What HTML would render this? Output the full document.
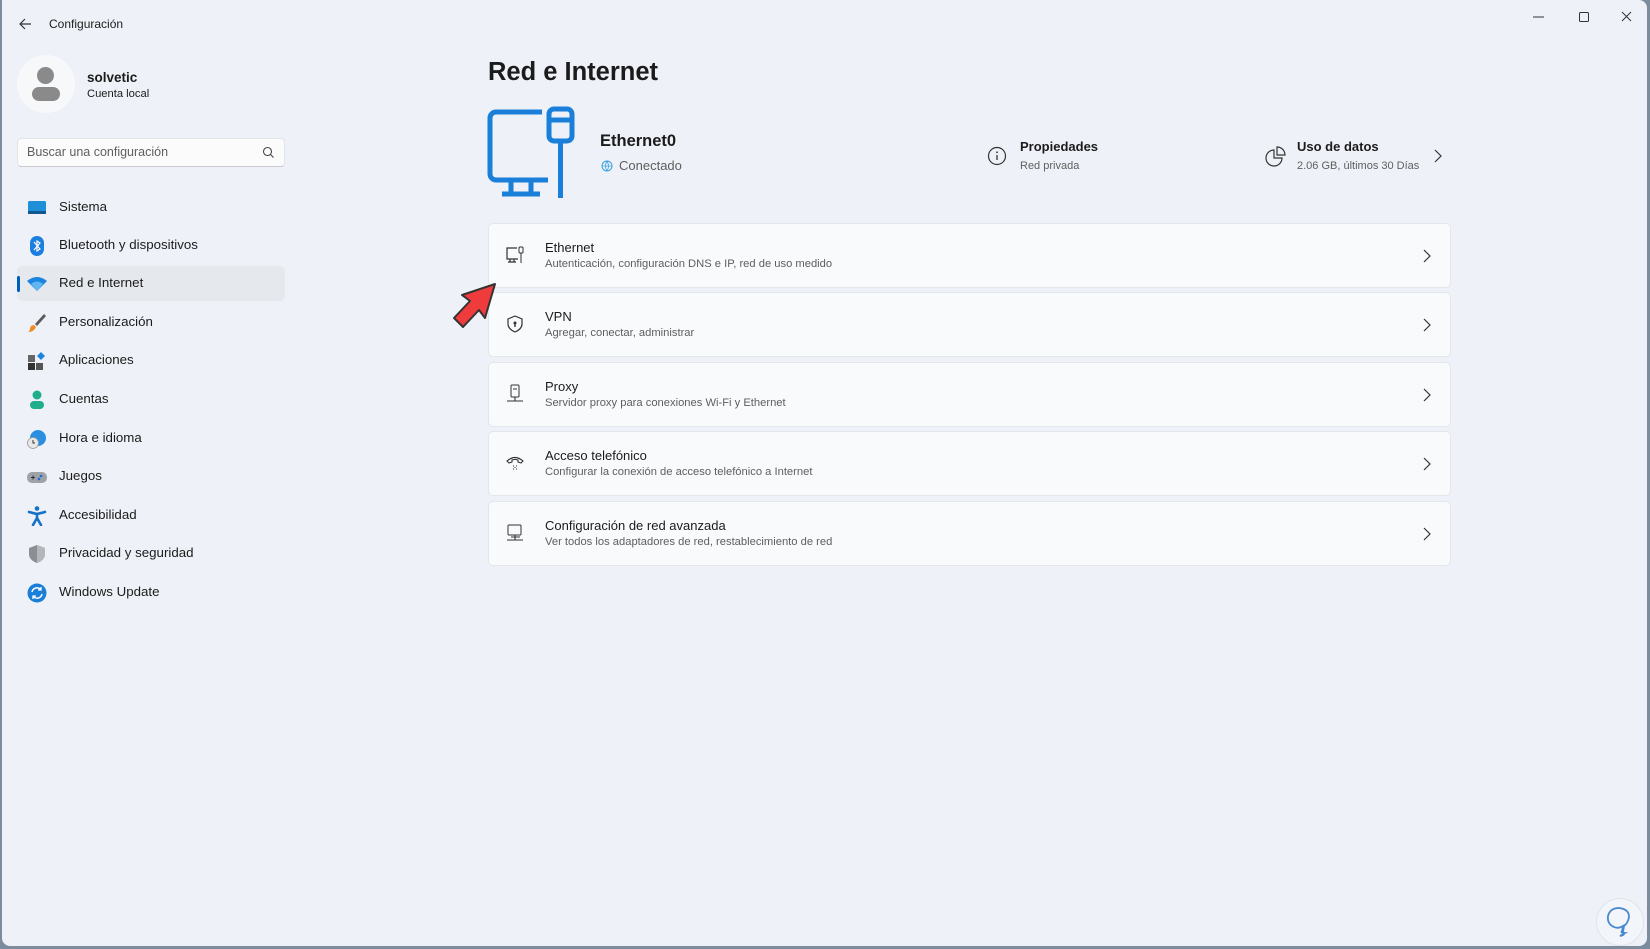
<!DOCTYPE html>
<html><head><meta charset="utf-8"><style>
*{margin:0;padding:0;box-sizing:border-box}
body{width:1650px;height:949px;background:#7d8c9c;font-family:"Segoe UI","Liberation Sans",sans-serif;color:#1b1b1b;position:relative;overflow:hidden}
.win{position:absolute;left:2px;top:0;width:1645px;height:946px;background:#eef2f8;border-radius:0 0 8px 8px;border-top-right-radius:8px;overflow:hidden}
.a{position:absolute}
.t{font-size:13px;white-space:nowrap}
.nav{position:absolute;left:15px;width:268px;height:35px}
.nav span{position:absolute;left:42px;top:9px;font-size:13.3px;color:#1b1b1b}
.nav .ic{position:absolute;left:10px;top:8px;width:20px;height:20px}
.card{position:absolute;left:486px;width:963px;height:65px;background:#f9fafc;border:1px solid #e3e6ea;border-radius:5px}
.card .ti{position:absolute;left:56px;top:16px;font-size:13px;color:#1b1b1b}
.card .su{position:absolute;left:56px;top:34px;font-size:11.2px;color:#5e5e5e}
.card svg.i{position:absolute;left:16px;top:21px}
.card svg.c{position:absolute;right:18px;top:25px}
</style></head><body><div class="win">
<svg class="a" style="left:16px;top:17px" width="14" height="14" viewBox="0 0 14 14"><path d="M13 7H2M7 2L2 7l5 5" stroke="#333" stroke-width="1.2" fill="none"/></svg>
<div class="a t" style="left:47px;top:17px;font-size:12px;color:#1b1b1b">Configuración</div>
<svg class="a" style="left:1530px;top:10px" width="110" height="14"><path d="M1 7h11" stroke="#333" stroke-width="1"/><rect x="47.5" y="2.5" width="9" height="9" rx="1" stroke="#333" fill="none"/><path d="M90 2l9 9M99 2l-9 9" stroke="#333"/></svg>
<div class="a" style="left:15px;top:55px;width:58px;height:58px;border-radius:50%;background:#f7f8fa"></div>
<div class="a" style="left:35px;top:67px;width:17px;height:17px;border-radius:50%;background:#8a8a8a"></div>
<div class="a" style="left:30px;top:87px;width:28px;height:14px;border-radius:7px;background:#8a8a8a"></div>
<div class="a t" style="left:85px;top:70px;font-size:13.5px;font-weight:bold">solvetic</div>
<div class="a t" style="left:85px;top:88px;font-size:11.2px">Cuenta local</div>
<div class="a" style="left:15px;top:138px;width:268px;height:29px;background:#fbfbfc;border:1px solid #e2e4e7;border-bottom-color:#c8cacd;border-radius:4px"></div>
<div class="a t" style="left:25px;top:145px;color:#5f5f5f;font-size:12.5px">Buscar una configuración</div>
<svg class="a" style="left:260px;top:146px" width="13" height="13"><circle cx="5.5" cy="5.5" r="4" stroke="#444" fill="none" stroke-width="1.1"/><path d="M8.5 8.5l3 3" stroke="#444" stroke-width="1.1"/></svg>

<div class="nav" style="top:190px"><svg class="ic" viewBox="0 0 20 20"><rect x="1" y="3" width="18" height="12" rx="1.5" fill="#1f8fd8"/><rect x="1" y="13" width="18" height="3" fill="#14568f"/></svg><span>Sistema</span></div>
<div class="nav" style="top:228px"><svg class="ic" viewBox="0 0 20 20"><rect x="3" y="0" width="14" height="20" rx="7" fill="#1a7fe0"/><path d="M7 6l6 7-3 2V5l3 2-6 7" stroke="#fff" stroke-width="1.2" fill="none"/></svg><span>Bluetooth y dispositivos</span></div>
<div class="nav" style="top:266px;background:#e5e9ee;border-radius:5px"><div class="a" style="left:0;top:10px;width:3px;height:16px;border-radius:2px;background:#005fb8"></div><svg class="ic" viewBox="0 0 20 20"><path d="M0 7q10-8 20 0l-10 10z" fill="#1a84de"/><path d="M4 10q6-5 12 0l-6 7z" fill="#5fb6f2"/></svg><span>Red e Internet</span></div>
<div class="nav" style="top:305px"><svg class="ic" viewBox="0 0 20 20"><path d="M17 1l2 2-9 10-2-2z" fill="#5a5a5a"/><path d="M7 12l2 2q-2 5-8 5 2-1 2-4 1-3 4-3z" fill="#f08a24"/></svg><span>Personalización</span></div>
<div class="nav" style="top:343px"><svg class="ic" viewBox="0 0 20 20"><rect x="1" y="4" width="7" height="7" fill="#666"/><rect x="1" y="12" width="7" height="7" fill="#333"/><rect x="9" y="12" width="7" height="7" fill="#555"/><path d="M14 1l4 4-4 4-4-4z" fill="#1a84de"/></svg><span>Aplicaciones</span></div>
<div class="nav" style="top:382px"><svg class="ic" viewBox="0 0 20 20"><circle cx="10" cy="5" r="4.5" fill="#1fae8c"/><rect x="3" y="11" width="14" height="8" rx="4" fill="#1fae8c"/></svg><span>Cuentas</span></div>
<div class="nav" style="top:421px"><svg class="ic" viewBox="0 0 20 20"><circle cx="11" cy="9" r="8" fill="#2a8fe0"/><circle cx="6" cy="14" r="5.5" fill="#e8e8e8" stroke="#999" stroke-width=".8"/><path d="M6 11v3h2" stroke="#333" fill="none"/></svg><span>Hora e idioma</span></div>
<div class="nav" style="top:459px"><svg class="ic" viewBox="0 0 20 20"><rect x="0" y="5" width="20" height="11" rx="5" fill="#9ea3a8"/><circle cx="14" cy="9" r="1.3" fill="#1a6fd0"/><circle cx="12" cy="12" r="1.3" fill="#1a6fd0"/><path d="M4 10.5h4M6 8.5v4" stroke="#333"/></svg><span>Juegos</span></div>
<div class="nav" style="top:498px"><svg class="ic" viewBox="0 0 20 20"><circle cx="10" cy="2.5" r="2.3" fill="#1670c8"/><path d="M2 6l8 2 8-2M10 8v4l-4 7M10 12l4 7" stroke="#1670c8" stroke-width="2.6" fill="none" stroke-linecap="round"/></svg><span>Accesibilidad</span></div>
<div class="nav" style="top:536px"><svg class="ic" viewBox="0 0 20 20"><path d="M10 1l8 3v6q0 6-8 9-8-3-8-9V4z" fill="#8a8f94"/><path d="M10 1l8 3v6q0 6-8 9z" fill="#b3b7bb"/></svg><span>Privacidad y seguridad</span></div>
<div class="nav" style="top:575px"><svg class="ic" viewBox="0 0 20 20"><circle cx="10" cy="10" r="9.5" fill="#1a7fd8"/><path d="M5 9a5 5 0 0 1 9-2M15 11a5 5 0 0 1-9 2" stroke="#fff" stroke-width="1.5" fill="none"/><path d="M14 4v3h-3M6 16v-3h3" stroke="#fff" stroke-width="1.3" fill="none"/></svg><span>Windows Update</span></div>

<div class="a t" style="left:486px;top:58px;font-size:25.5px;font-weight:600">Red e Internet</div>
<svg class="a" style="left:484px;top:106px" width="96" height="94" viewBox="0 0 96 94"><path d="M56 6H10a6 6 0 0 0-6 6v56a6 6 0 0 0 6 6h52" stroke="#1a7fd8" stroke-width="5" fill="none"/><path d="M25 74v14M45 74v14M16 88h38" stroke="#1a7fd8" stroke-width="5"/><rect x="63" y="3" width="23" height="32" rx="5" stroke="#1a7fd8" stroke-width="5" fill="none"/><path d="M63 14h23M74.5 35v57" stroke="#1a7fd8" stroke-width="5"/></svg>
<div class="a t" style="left:598px;top:132px;font-size:16.5px;font-weight:600">Ethernet0</div>
<svg class="a" style="left:599px;top:160px" width="12" height="12"><circle cx="6" cy="6" r="5" fill="none" stroke="#3aa0e0"/><path d="M1 6h10M6 1q-3 5 0 10M6 1q3 5 0 10" stroke="#3aa0e0" fill="none" stroke-width=".8"/></svg>
<div class="a t" style="left:617px;top:158px;font-size:13px;color:#5e5e5e">Conectado</div>
<svg class="a" style="left:985px;top:146px" width="20" height="20"><circle cx="10" cy="10" r="8.5" stroke="#333" fill="none" stroke-width="1.2"/><path d="M10 9v5" stroke="#333" stroke-width="1.3"/><circle cx="10" cy="6.3" r=".9" fill="#333"/></svg>
<div class="a t" style="left:1018px;top:139px;font-size:13px;font-weight:600">Propiedades</div>
<div class="a t" style="left:1018px;top:160px;font-size:11px;color:#5e5e5e">Red privada</div>
<svg class="a" style="left:1263px;top:146px" width="21" height="21"><path d="M9 4a8 8 0 1 0 8 8H9z" stroke="#333" fill="none" stroke-width="1.2"/><path d="M12 1a8 8 0 0 1 8 8h-8z" stroke="#333" fill="none" stroke-width="1.2"/></svg>
<div class="a t" style="left:1295px;top:139px;font-size:13px;font-weight:600">Uso de datos</div>
<div class="a t" style="left:1295px;top:160px;font-size:11px;color:#5e5e5e">2.06 GB, últimos 30 Días</div>
<svg class="a" style="left:1431px;top:149px" width="10" height="14"><path d="M2 1l6 6-6 6" stroke="#333" fill="none" stroke-width="1.2"/></svg>

<div class="card" style="top:223px"><svg class="i" width="20" height="20" viewBox="0 0 20 20"><path d="M12 3H2v11h11M5 14v3M9 14v3M3 17h8" stroke="#333" fill="none" stroke-width="1.2"/><rect x="14" y="2" width="4" height="6" rx="1" stroke="#333" fill="none"/><path d="M16 8v10" stroke="#333"/></svg><div class="ti">Ethernet</div><div class="su">Autenticación, configuración DNS e IP, red de uso medido</div><svg class="c" width="10" height="14"><path d="M2 1l6 6-6 6" stroke="#333" fill="none" stroke-width="1.2"/></svg></div>
<div class="card" style="top:292px"><svg class="i" width="20" height="20" viewBox="0 0 20 20"><path d="M10 2l7 3v5q0 5-7 8-7-3-7-8V5z" stroke="#333" fill="none" stroke-width="1.2"/><circle cx="10" cy="9" r="1.5" fill="#333"/><path d="M10 9v4" stroke="#333" stroke-width="1.4"/></svg><div class="ti">VPN</div><div class="su">Agregar, conectar, administrar</div><svg class="c" width="10" height="14"><path d="M2 1l6 6-6 6" stroke="#333" fill="none" stroke-width="1.2"/></svg></div>
<div class="card" style="top:362px"><svg class="i" width="20" height="20" viewBox="0 0 20 20"><rect x="6" y="1" width="8" height="12" rx="1" stroke="#333" fill="none"/><path d="M8 5h4M10 13v4M2 17h16" stroke="#333" stroke-width="1.1"/></svg><div class="ti">Proxy</div><div class="su">Servidor proxy para conexiones Wi-Fi y Ethernet</div><svg class="c" width="10" height="14"><path d="M2 1l6 6-6 6" stroke="#333" fill="none" stroke-width="1.2"/></svg></div>
<div class="card" style="top:431px"><svg class="i" width="20" height="20" viewBox="0 0 20 20"><path d="M2 8q8-7 16 0l-2 2-3-1V7q-3-1-6 0v2l-3 1z" stroke="#333" fill="none" stroke-width="1.1"/><path d="M8 13h1M11 13h1M8 16h1M11 16h1M9.5 14.5h1" stroke="#333"/></svg><div class="ti">Acceso telefónico</div><div class="su">Configurar la conexión de acceso telefónico a Internet</div><svg class="c" width="10" height="14"><path d="M2 1l6 6-6 6" stroke="#333" fill="none" stroke-width="1.2"/></svg></div>
<div class="card" style="top:501px"><svg class="i" width="20" height="20" viewBox="0 0 20 20"><rect x="3" y="2" width="13" height="10" rx="1" stroke="#333" fill="none"/><path d="M6 14h9M10 12v5M2 17h16" stroke="#333" stroke-width="1.1"/></svg><div class="ti">Configuración de red avanzada</div><div class="su">Ver todos los adaptadores de red, restablecimiento de red</div><svg class="c" width="10" height="14"><path d="M2 1l6 6-6 6" stroke="#333" fill="none" stroke-width="1.2"/></svg></div>

<svg class="a" style="left:448px;top:280px" width="52" height="56" viewBox="0 0 52 56"><path d="M45 4L12 15l8 6-16 17 9 9 16-17 6 8z" fill="#ef3b3b" stroke="#333" stroke-width="2" stroke-linejoin="round"/></svg>
<div class="a" style="left:1594px;top:898px;width:48px;height:48px;border-radius:50%;background:#f2f5f9;border:1px solid #dfe4ea"></div>
<svg class="a" style="left:1598px;top:902px" width="40" height="40" viewBox="0 0 40 40"><path d="M14 25q-7-3-6-11 2-8 11-8 10 1 10 9-1 6-5 9l-1 6q3 3-3 4l5-3q-5 0-3-2l1-5q-5 3-9 1z" stroke="#4a88d0" stroke-width="1.8" fill="none"/></svg>
</div></body></html>
